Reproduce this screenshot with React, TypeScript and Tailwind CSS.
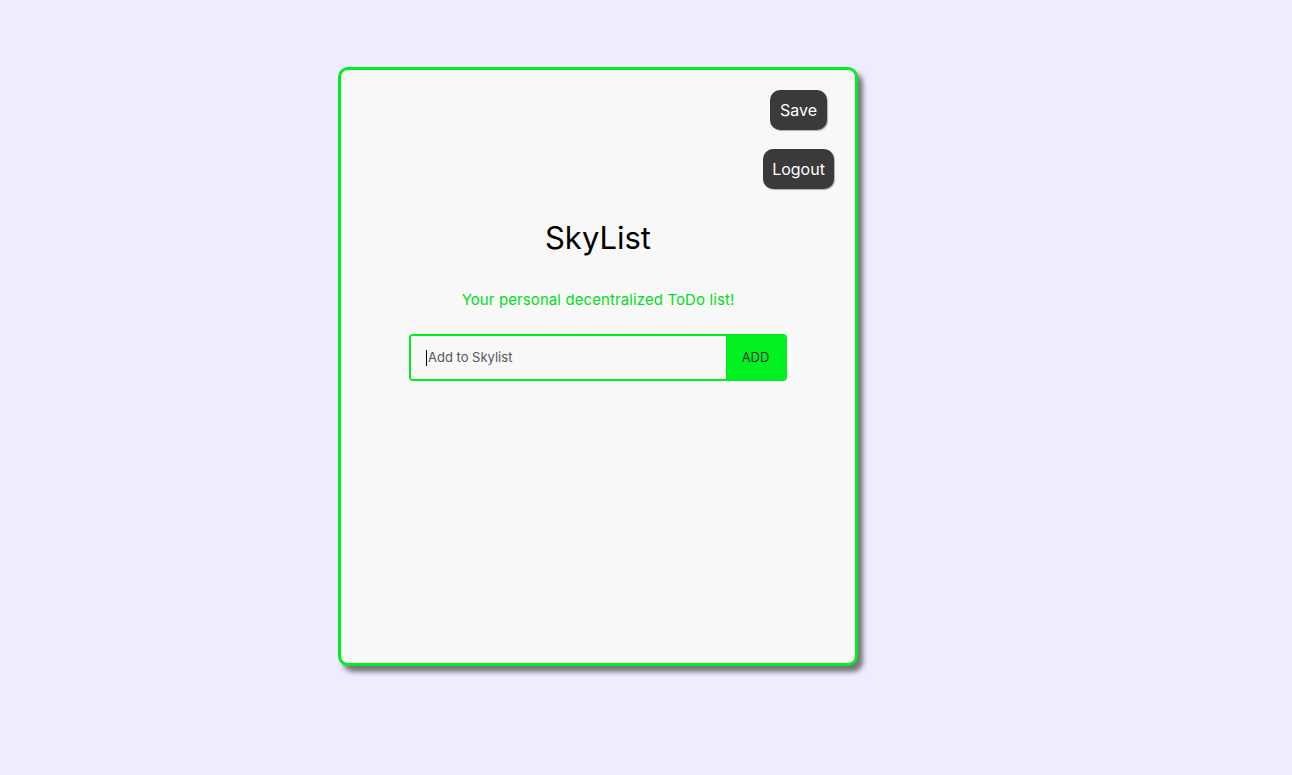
export default function App() {
  return (
    <div className="min-h-[775px] w-full bg-[#eeedfd] font-['Inter','Noto_Sans',sans-serif]">
      <div className="pt-[67px] pl-[338px]">
        <div className="flex h-[599px] w-[520px] flex-col rounded-[10px] border-[3px] border-[#00ee22] bg-[#f8f8f8] shadow-[5px_6px_5px_rgba(0,0,0,0.5)]">
          <div className="flex flex-col items-center gap-[19px] self-end pr-[21px] pt-[20px]">
            <button className="h-[40px] w-[57px] rounded-[10px] bg-[#3a3a3a] text-[16px] text-white shadow-[1px_1px_1px_rgba(0,0,0,0.3)]">
              Save
            </button>
            <button className="h-[40px] w-[71px] rounded-[10px] bg-[#3a3a3a] text-[16px] text-white shadow-[1px_1px_1px_rgba(0,0,0,0.3)]">
              Logout
            </button>
          </div>
          <h1 className="mt-[30px] text-center text-[31px] leading-[38px] text-black">SkyList</h1>
          <p className="mt-[31px] text-center text-[15px] leading-[24px] tracking-[0.1px] text-[#00dd22]">
            Your personal decentralized ToDo list!
          </p>
          <div className="mx-auto mt-[22px] flex h-[47px] w-[378px] overflow-hidden rounded-[4px] border-2 border-[#00ee22]">
            <div className="flex flex-1 items-center bg-[#f8f8f8] pl-[15px] text-[13px] text-[#555]">
              <span className="mr-[1px] h-[16px] w-px bg-black" />
              Add to Skylist
            </div>
            <button className="w-[59px] bg-[#00f020] text-[13px] text-[#333]">ADD</button>
          </div>
        </div>
      </div>
    </div>
  )
}
